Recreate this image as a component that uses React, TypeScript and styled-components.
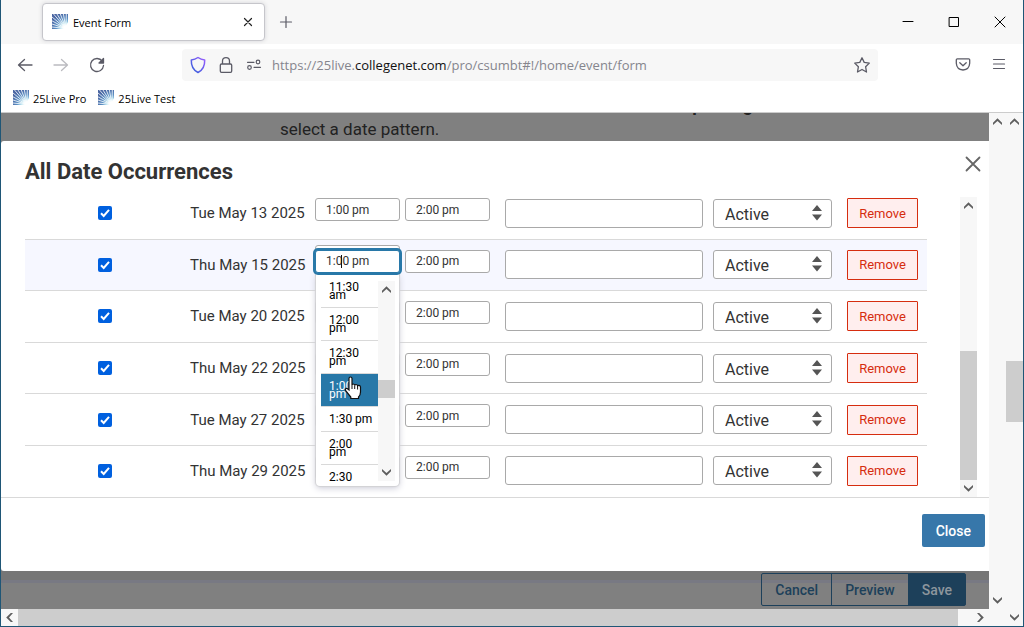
import React from 'react';
import styled, { createGlobalStyle, css } from 'styled-components';

const Global = createGlobalStyle`
  * { box-sizing: border-box; }
  body { margin: 0; font-family: Roboto, "Liberation Sans", sans-serif; color: #333; background: #f7f7f7; }
  button, input, select { font-family: inherit; margin: 0; }
  a { color: inherit; text-decoration: none; }
`;

const blue = '#2878a8';
const chromeFont = '"Open Sans", "Noto Sans", sans-serif';

/* ---------- browser window ---------- */
const Frame = styled.div`
  display: flex;
  flex-direction: column;
  min-height: 100vh;
  border: solid #1f5676;
  border-width: 0 1px 1px;
  background: #fff;
`;

const TitleBar = styled.header`
  display: flex;
  align-items: center;
  height: 44px;
  padding-left: 41px;
  background: #f7f7f7;
  font: 11px ${chromeFont};
  color: #000;
`;

const Tab = styled.div`
  display: flex;
  align-items: center;
  gap: 5px;
  width: 223px;
  height: 38px;
  padding: 0 6px 0 9px;
  border: 1px solid #c6c6cb;
  border-radius: 4px;
  background: #fff;
  box-shadow: 0 0 4px #d4d4d8;
`;

const TabTitle = styled.span`
  flex: 1;
`;

const IconButton = styled.button<{ $w?: number; $h?: number }>`
  display: flex;
  align-items: center;
  justify-content: center;
  width: ${p => p.$w ?? 20}px;
  height: ${p => p.$h ?? 20}px;
  padding: 0;
  border: 0;
  background: none;
  color: #5b5b66;
`;

const WindowButtons = styled.div`
  display: flex;
  margin-left: auto;
  color: #000;
`;

const NavBar = styled.nav`
  display: flex;
  align-items: center;
  height: 42px;
  padding: 0 6px;
`;

const AddressBar = styled.label`
  display: flex;
  flex: 1;
  align-items: center;
  height: 32px;
  margin: 0 67px;
  padding: 0 6px;
  border-radius: 4px;
  background: #f7f7f7;
`;

const SiteIcons = styled.span`
  display: flex;
  gap: 10px;
  padding-left: 1px;
`;

const Address = styled.span`
  flex: 1;
  padding-left: 9px;
  font: 13px ${chromeFont};
  color: #85858d;
  b { font-weight: 400; color: #111; }
`;

const Bookmarks = styled.div`
  display: flex;
  gap: 12px;
  height: 27px;
  padding: 0 12px 2px;
  border-bottom: 1px solid #ccc;
  font: 11px ${chromeFont};
  color: #000;
`;

const Bookmark = styled.a`
  display: flex;
  align-items: center;
  gap: 4px;
`;

/* ---------- scroll bars ---------- */
const Track = styled.div<{ $row?: boolean }>`
  display: flex;
  flex-direction: ${p => (p.$row ? 'row' : 'column')};
  align-items: center;
  flex: none;
  ${p => (p.$row ? 'height: 17px; padding-right: 17px;' : 'width: 17px;')}
  background: #f7f7f7;
`;

const Space = styled.div<{ $grow: number }>`
  flex: ${p => p.$grow};
`;

const Thumb = styled.div<{ $grow: number }>`
  flex: ${p => p.$grow};
  align-self: stretch;
  background: #cdcdcd;
`;

const ArrowBox = styled.button`
  display: flex;
  flex: none;
  align-items: center;
  justify-content: center;
  width: 17px;
  height: 17px;
  padding: 0;
  border: 0;
  background: #f7f7f7;
`;

const turns = { up: 0, right: 90, down: 180, left: 270 };

const Arrow = ({ to }: { to: keyof typeof turns }) => (
  <ArrowBox type="button" aria-label={`Scroll ${to}`}>
    <svg width="17" height="17" viewBox="0 0 17 17">
      <path d="M4 9.8 8.5 5.2 13 9.8V12L8.5 8 4 12Z" fill="#5e5e5e" transform={`rotate(${turns[to]} 8.5 8.5)`} />
    </svg>
  </ArrowBox>
);

/* ---------- page under the dialog ---------- */
const Content = styled.div`
  display: flex;
  flex: 1;
`;

const Viewport = styled.div`
  display: flex;
  flex: 1;
  flex-direction: column;
  min-width: 0;
`;

const PageColumn = styled.main`
  display: flex;
  flex: 1;
  flex-direction: column;
  background: #808080;
`;

const Instructions = styled.div`
  display: flex;
  flex-direction: column;
  justify-content: flex-end;
  height: 28px;
  padding-left: 279px;
  overflow: hidden;
  font-size: 17px;
  line-height: 23px;
  color: #222;
`;

const Strong = styled.b`
  flex: none;
  padding: 0 0 2px 391px;
  font-size: 18px;
`;

const Sentence = styled.span`
  flex: none;
`;

const PageActions = styled.div`
  display: flex;
  justify-content: flex-end;
  padding: 2px 23px 3px;
  background: linear-gradient(#767676 0 9px, #787983 9px 12px, #808080 12px);
`;

const PageButton = styled.button<{ $solid?: boolean }>`
  height: 33px;
  margin-left: -1px;
  padding: 0 13px;
  border: 1px solid #1d405a;
  background: ${p => (p.$solid ? '#1d405a' : 'transparent')};
  color: ${p => (p.$solid ? '#8d969d' : '#1d405a')};
  font-size: 14px;
  font-weight: 500;
  &:first-child { border-radius: 2px 0 0 2px; }
  &:last-child { border-radius: 0 2px 2px 0; }
`;

/* ---------- dialog ---------- */
const Dialog = styled.section`
  display: flex;
  flex: 1;
  flex-direction: column;
  border-radius: 3px 0 0 3px;
  background: #fff;
`;

const DialogHead = styled.div`
  display: flex;
  align-items: center;
  justify-content: space-between;
  height: 56px;
  padding: 0 4px 0 24px;
`;

const Title = styled.h2`
  margin: 6px 0 0;
  font-size: 22px;
  line-height: 24px;
  font-weight: 700;
  color: #333;
`;

const CloseIcon = styled(IconButton)`
  margin-bottom: 10px;
  color: #666;
`;

const DialogBody = styled.div`
  display: flex;
  flex: 1;
  padding: 0 12px 0 24px;
  border-bottom: 1px solid #d9d9d9;
`;

const TableClip = styled.div`
  flex: 1;
  height: 300px;
  padding-right: 33px;
  overflow: hidden;
`;

const Table = styled.table`
  width: 100%;
  height: 308px;
  margin-top: -9px;
  border-spacing: 0;
  table-layout: fixed;
`;

const Row = styled.tr<{ $current?: boolean }>`
  background: ${p => (p.$current ? '#f6f7ff' : 'transparent')};
  &:not(:last-child) > td { border-bottom: 1px solid #d9d9d9; }
`;

const Cell = styled.td<{ $center?: boolean; $top?: boolean }>`
  padding: ${p => (p.$top ? '10px 5px 0' : '0 5px')};
  vertical-align: ${p => (p.$top ? 'top' : 'middle')};
  text-align: ${p => (p.$center ? 'center' : 'left')};
  font-size: 15px;
  white-space: nowrap;
`;

const LastCell = styled(Cell)`
  padding: 0 9px 0 10px;
`;

const Check = styled.input`
  display: block;
  width: 14px;
  height: 14px;
  margin: 0 auto;
  appearance: none;
  border-radius: 2px;
  background: #0060df;
`;

const CheckWrap = styled.span`
  display: block;
  position: relative;
  width: 14px;
  margin: 0 auto;
  svg { position: absolute; inset: 0; pointer-events: none; }
`;

const Times = styled.div`
  display: flex;
  gap: 5px;
`;

const box = css`
  border: 1px solid #a9a9a9;
  border-radius: 3px;
  background: #fff;
  color: #333;
`;

const TimeInput = styled.input<{ $focused?: boolean }>`
  ${box}
  position: relative;
  display: block;
  width: 85px;
  height: 23px;
  padding: 0 10px;
  font-size: 12px;
  ${p => p.$focused && css`
    border-color: ${blue};
    box-shadow: 0 0 0 2px ${blue};
  `}
`;

const Combo = styled.div`
  position: relative;
  z-index: 1;
  &::before {
    ${box}
    content: "";
    position: absolute;
    inset: -5px 0;
  }
`;

const Caret = styled.i`
  position: absolute;
  top: 5px;
  left: 26px;
  width: 1px;
  height: 13px;
  background: #111;
`;

const Menu = styled.div`
  position: absolute;
  top: 24px;
  left: 1px;
  display: flex;
  width: 83px;
  height: 212px;
  padding: 7px 4px 5px 5px;
  border-radius: 0 0 4px 4px;
  background: #fff;
  box-shadow: 0 0 1px 1px #d2d2d4, 0 2px 7px #c9c9d6;
`;

const Options = styled.ul`
  flex: 1;
  margin: 0;
  padding: 0;
  overflow: hidden;
  list-style: none;
`;

const Option = styled.li<{ $selected?: boolean }>`
  padding: 8px 6px 8px 8px;
  border-bottom: 1px solid #d9d9d9;
  background: ${p => (p.$selected ? blue : '#fff')};
  color: ${p => (p.$selected ? '#fff' : '#000')};
  font-size: 12px;
  line-height: 8px;
  white-space: normal;
  &:first-child { margin-top: -6px; }
`;

const Pointer = styled.svg`
  position: absolute;
  top: 102px;
  left: 28px;
`;

const TextInput = styled.input`
  ${box}
  display: block;
  width: 100%;
  height: 29px;
`;

const SelectWrap = styled.div`
  position: relative;
  svg { position: absolute; top: 6px; right: 10px; pointer-events: none; }
`;

const Select = styled.select`
  ${box}
  display: block;
  width: 100%;
  height: 29px;
  padding: 2px 12px 0 11px;
  appearance: none;
  font-size: 16px;
`;

const RemoveButton = styled.button`
  display: block;
  width: 71px;
  height: 30px;
  padding: 0;
  border: 1px solid #d62d0f;
  border-radius: 1px;
  background: #ffeeee;
  color: #d62d0f;
  font-size: 13px;
`;

const DialogFoot = styled.div`
  display: flex;
  justify-content: flex-end;
  padding: 16px 4px 24px;
`;

const CloseButton = styled.button`
  height: 33px;
  padding: 0 14px;
  border: 0;
  border-radius: 2px;
  background: #3777aa;
  color: #fff;
  font-size: 14px;
  font-weight: 500;
`;

/* ---------- drawings ---------- */
const Logo = () => (
  <svg width="16" height="16" viewBox="0 0 16 16">
    <defs>
      <radialGradient id="glow" gradientUnits="userSpaceOnUse" cx="14" cy="14.5" r="18">
        <stop offset="0.12" stopColor="#fff" />
        <stop offset="0.3" stopColor="#a9dcec" />
        <stop offset="0.55" stopColor="#5c90c4" />
        <stop offset="0.9" stopColor="#4a65a2" />
      </radialGradient>
    </defs>
    <path d="M0 0H16V8L12 15H0Z" fill="url(#glow)" />
    <path
      d="M14 14.500 0 13M14 14.500 0 10M14 14.500 0 6.800M14 14.500 0 3M14 14.500 1.500 0M14 14.500 5 0M14 14.500 8.300 0M14 14.500 11.400 0M14 14.500 14.300 0"
      stroke="#fff"
      strokeWidth="0.8"
    />
  </svg>
);

const Line = ({ d, size = 16, w = 1.3, color = 'currentColor', children }: {
  d: string; size?: number; w?: number; color?: string; children?: React.ReactNode;
}) => (
  <svg width={size} height={size} viewBox={`0 0 ${size} ${size}`} fill="none" stroke={color} strokeWidth={w} strokeLinecap="round" strokeLinejoin="round">
    {children}
    <path d={d} />
  </svg>
);

const rows = [
  'Tue May 13 2025',
  'Thu May 15 2025',
  'Tue May 20 2025',
  'Thu May 22 2025',
  'Tue May 27 2025',
  'Thu May 29 2025',
];
const times = ['11:30 am', '12:00 pm', '12:30 pm', '1:00 pm', '1:30\u00a0pm', '2:00 pm', '2:30 pm'];

const TimeCombo = () => (
  <Combo>
    <Menu>
      <Options role="listbox" aria-label="Start time">
        {times.map(t => (
          <Option key={t} role="option" aria-selected={t === '1:00 pm'} $selected={t === '1:00 pm'}>{t}</Option>
        ))}
      </Options>
      <Track>
        <Arrow to="up" />
        <Space $grow={82} />
        <Thumb $grow={18} />
        <Space $grow={66} />
        <Arrow to="down" />
      </Track>
      <Pointer width="18" height="24" viewBox="0 0 18 24">
        <path d="M5 2.500Q5 1 6.500 1T8 2.500V9q0-1 1.200-1t1.500 1.400q.2-.9 1.400-.9t1.500 1.400q.3-.7 1.400-.6T16.500 11v5q0 3-2 5v1.500H6.800V21L1.500 14.500Q1 13 2 12.500t2.200.8L5 14Z" fill="#fff" stroke="#111" strokeWidth="1.200" />
        <path d="M8 9v4M10.700 9.500V13M13.600 10v3.500" stroke="#111" />
      </Pointer>
    </Menu>
    <TimeInput $focused aria-label="Start time" defaultValue="1:00 pm" />
    <Caret />
  </Combo>
);

const OccurrenceRow = ({ date, current }: { date: string; current: boolean }) => (
  <Row $current={current}>
    <Cell $center>
      <CheckWrap>
        <Check type="checkbox" defaultChecked aria-label={`Include ${date}`} />
        <svg width="14" height="14" viewBox="0 0 14 14" fill="none" stroke="#fff" strokeWidth="2"><path d="M3 7.300 5.700 10 11 3.800" /></svg>
      </CheckWrap>
    </Cell>
    <Cell $center>{date}</Cell>
    <Cell $top>
      <Times>
        {current ? <TimeCombo /> : <TimeInput aria-label={`Start, ${date}`} defaultValue="1:00 pm" />}
        <TimeInput aria-label={`End, ${date}`} defaultValue="2:00 pm" />
      </Times>
    </Cell>
    <Cell><TextInput aria-label={`Comment, ${date}`} /></Cell>
    <Cell>
      <SelectWrap>
        <Select aria-label={`Status, ${date}`}><option>Active</option></Select>
        <svg width="10" height="16" viewBox="0 0 10 16" fill="#555"><path d="M0 6 5 0 10 6ZM0 9.500H10L5 15.500Z" /></svg>
      </SelectWrap>
    </Cell>
    <LastCell><RemoveButton type="button">Remove</RemoveButton></LastCell>
  </Row>
);

export default function App() {
  return (
    <Frame>
      <Global />
      <TitleBar>
        <Tab>
          <Logo />
          <TabTitle>Event Form</TabTitle>
          <IconButton aria-label="Close tab"><Line d="M4.500 4.500 11.500 11.500M11.500 4.500 4.500 11.500" w={1.2} color="#222" /></IconButton>
        </Tab>
        <IconButton $w={42} aria-label="New tab"><Line d="M8 2.500V13.500M2.500 8H13.500" w={1.2} /></IconButton>
        <WindowButtons>
          <IconButton $w={46} aria-label="Minimize"><Line d="M3 7.500H13" w={1} color="#000" /></IconButton>
          <IconButton $w={46} aria-label="Maximize"><Line d="M3.500 3.500H12.500V12.500H3.500Z" w={1} color="#000" /></IconButton>
          <IconButton $w={46} aria-label="Close window"><Line d="M3 3 13 13M13 3 3 13" w={1} color="#000" /></IconButton>
        </WindowButtons>
      </TitleBar>
      <NavBar>
        <IconButton $w={36} aria-label="Back"><Line d="M15 8H2M7.500 2.500 1.500 8 7.500 13.500" /></IconButton>
        <IconButton $w={36} aria-label="Forward"><Line d="M1 8H14M8.500 2.500 14.500 8 8.500 13.500" color="#bbbbc0" /></IconButton>
        <IconButton $w={36} aria-label="Reload">
          <Line d="M13.300 4.200A6.500 6.500 0 1 0 14.500 8.500"><path d="M14.500 1.500V6H10Z" fill="currentColor" /></Line>
        </IconButton>
        <AddressBar>
          <SiteIcons>
            <svg width="18" height="18" viewBox="0 0 18 18" fill="none">
              <defs><linearGradient id="shield" x1="0" y1="1" x2="1" y2="0"><stop offset="0" stopColor="#2f5fd8" /><stop offset="1" stopColor="#9a5cff" /></linearGradient></defs>
              <path d="M9 1.500C11 3 13.200 3.800 15.700 4 15.900 9.500 14 14 9 16.500 4 14 2.100 9.500 2.300 4 4.800 3.800 7 3 9 1.500Z" stroke="url(#shield)" strokeWidth="1.500" strokeLinejoin="round" />
            </svg>
            <Line size={18} color="#5b5b66" d="M5.500 8V5Q5.500 1.700 9 1.700T12.500 5V8M4.500 8H13.500Q14.700 8 14.700 9.200V15Q14.700 16.300 13.500 16.300H4.500Q3.300 16.300 3.300 15V9.200Q3.300 8 4.500 8Z" />
            <Line size={18} color="#5b5b66" w={1.2} d="M2.500 6.300H9M9 11.300H15.500"><circle cx="13" cy="6" r="1.800" /><circle cx="4.500" cy="11.500" r="1.800" /></Line>
          </SiteIcons>
          <Address>https://25live.<b>collegenet.com</b>/pro/csumbt#!/home/event/form</Address>
          <IconButton aria-label="Bookmark this page"><Line d="M8 .8 10.200 5.400 15.300 6.100 11.600 9.700 12.500 15 8 12.500 3.500 15 4.400 9.700 .7 6.100 5.800 5.400Z" /></IconButton>
        </AddressBar>
        <IconButton $w={36} aria-label="Save to Pocket"><Line d="M2.300 1.800H13.700Q14.700 1.800 14.700 2.800V6.300Q14.300 12.600 8 13 1.700 12.600 1.300 6.300V2.800Q1.300 1.800 2.300 1.800ZM4.800 5.800 8 8.800 11.200 5.800" /></IconButton>
        <IconButton $w={36} aria-label="Menu"><Line d="M2.500 2.500H13.500M2.500 7H13.500M2.500 11.500H13.500" w={1.2} /></IconButton>
      </NavBar>
      <Bookmarks>
        <Bookmark href="#pro"><Logo />25Live Pro</Bookmark>
        <Bookmark href="#test"><Logo />25Live Test</Bookmark>
      </Bookmarks>

      <Content>
        <Viewport>
          <Content>
            <PageColumn>
              <Instructions>
                <Strong>Repeating</Strong>
                <Sentence>select a date pattern.</Sentence>
              </Instructions>
              <Dialog role="dialog" aria-labelledby="dialog-title">
                <DialogHead>
                  <Title id="dialog-title">All Date Occurrences</Title>
                  <CloseIcon $w={24} $h={24} aria-label="Close dialog"><Line d="M1.500 1.500 14.500 14.500M14.500 1.500 1.500 14.500" w={1.8} /></CloseIcon>
                </DialogHead>
                <DialogBody>
                  <TableClip>
                    <Table>
                      <colgroup>
                        <col width="160" /><col width="125" /><col width="190" /><col /><col width="129" /><col width="90" />
                      </colgroup>
                      <tbody>
                        {rows.map((date, i) => <OccurrenceRow key={date} date={date} current={i === 1} />)}
                      </tbody>
                    </Table>
                  </TableClip>
                  <Track>
                    <Arrow to="up" />
                    <Space $grow={136} />
                    <Thumb $grow={129} />
                    <Arrow to="down" />
                  </Track>
                </DialogBody>
                <DialogFoot><CloseButton type="button">Close</CloseButton></DialogFoot>
              </Dialog>
              <PageActions>
                <PageButton type="button">Cancel</PageButton>
                <PageButton type="button">Preview</PageButton>
                <PageButton type="button" $solid>Save</PageButton>
              </PageActions>
            </PageColumn>
            <Track>
              <Arrow to="up" />
              <Space $grow={1} />
              <Arrow to="down" />
            </Track>
          </Content>
          <Track $row>
            <Arrow to="left" />
            <Thumb $grow={940} />
            <Space $grow={14} />
            <Arrow to="right" />
          </Track>
        </Viewport>
        <Track>
          <Arrow to="up" />
          <Space $grow={231} />
          <Thumb $grow={62} />
          <Space $grow={187} />
          <Arrow to="down" />
        </Track>
      </Content>
    </Frame>
  );
}
